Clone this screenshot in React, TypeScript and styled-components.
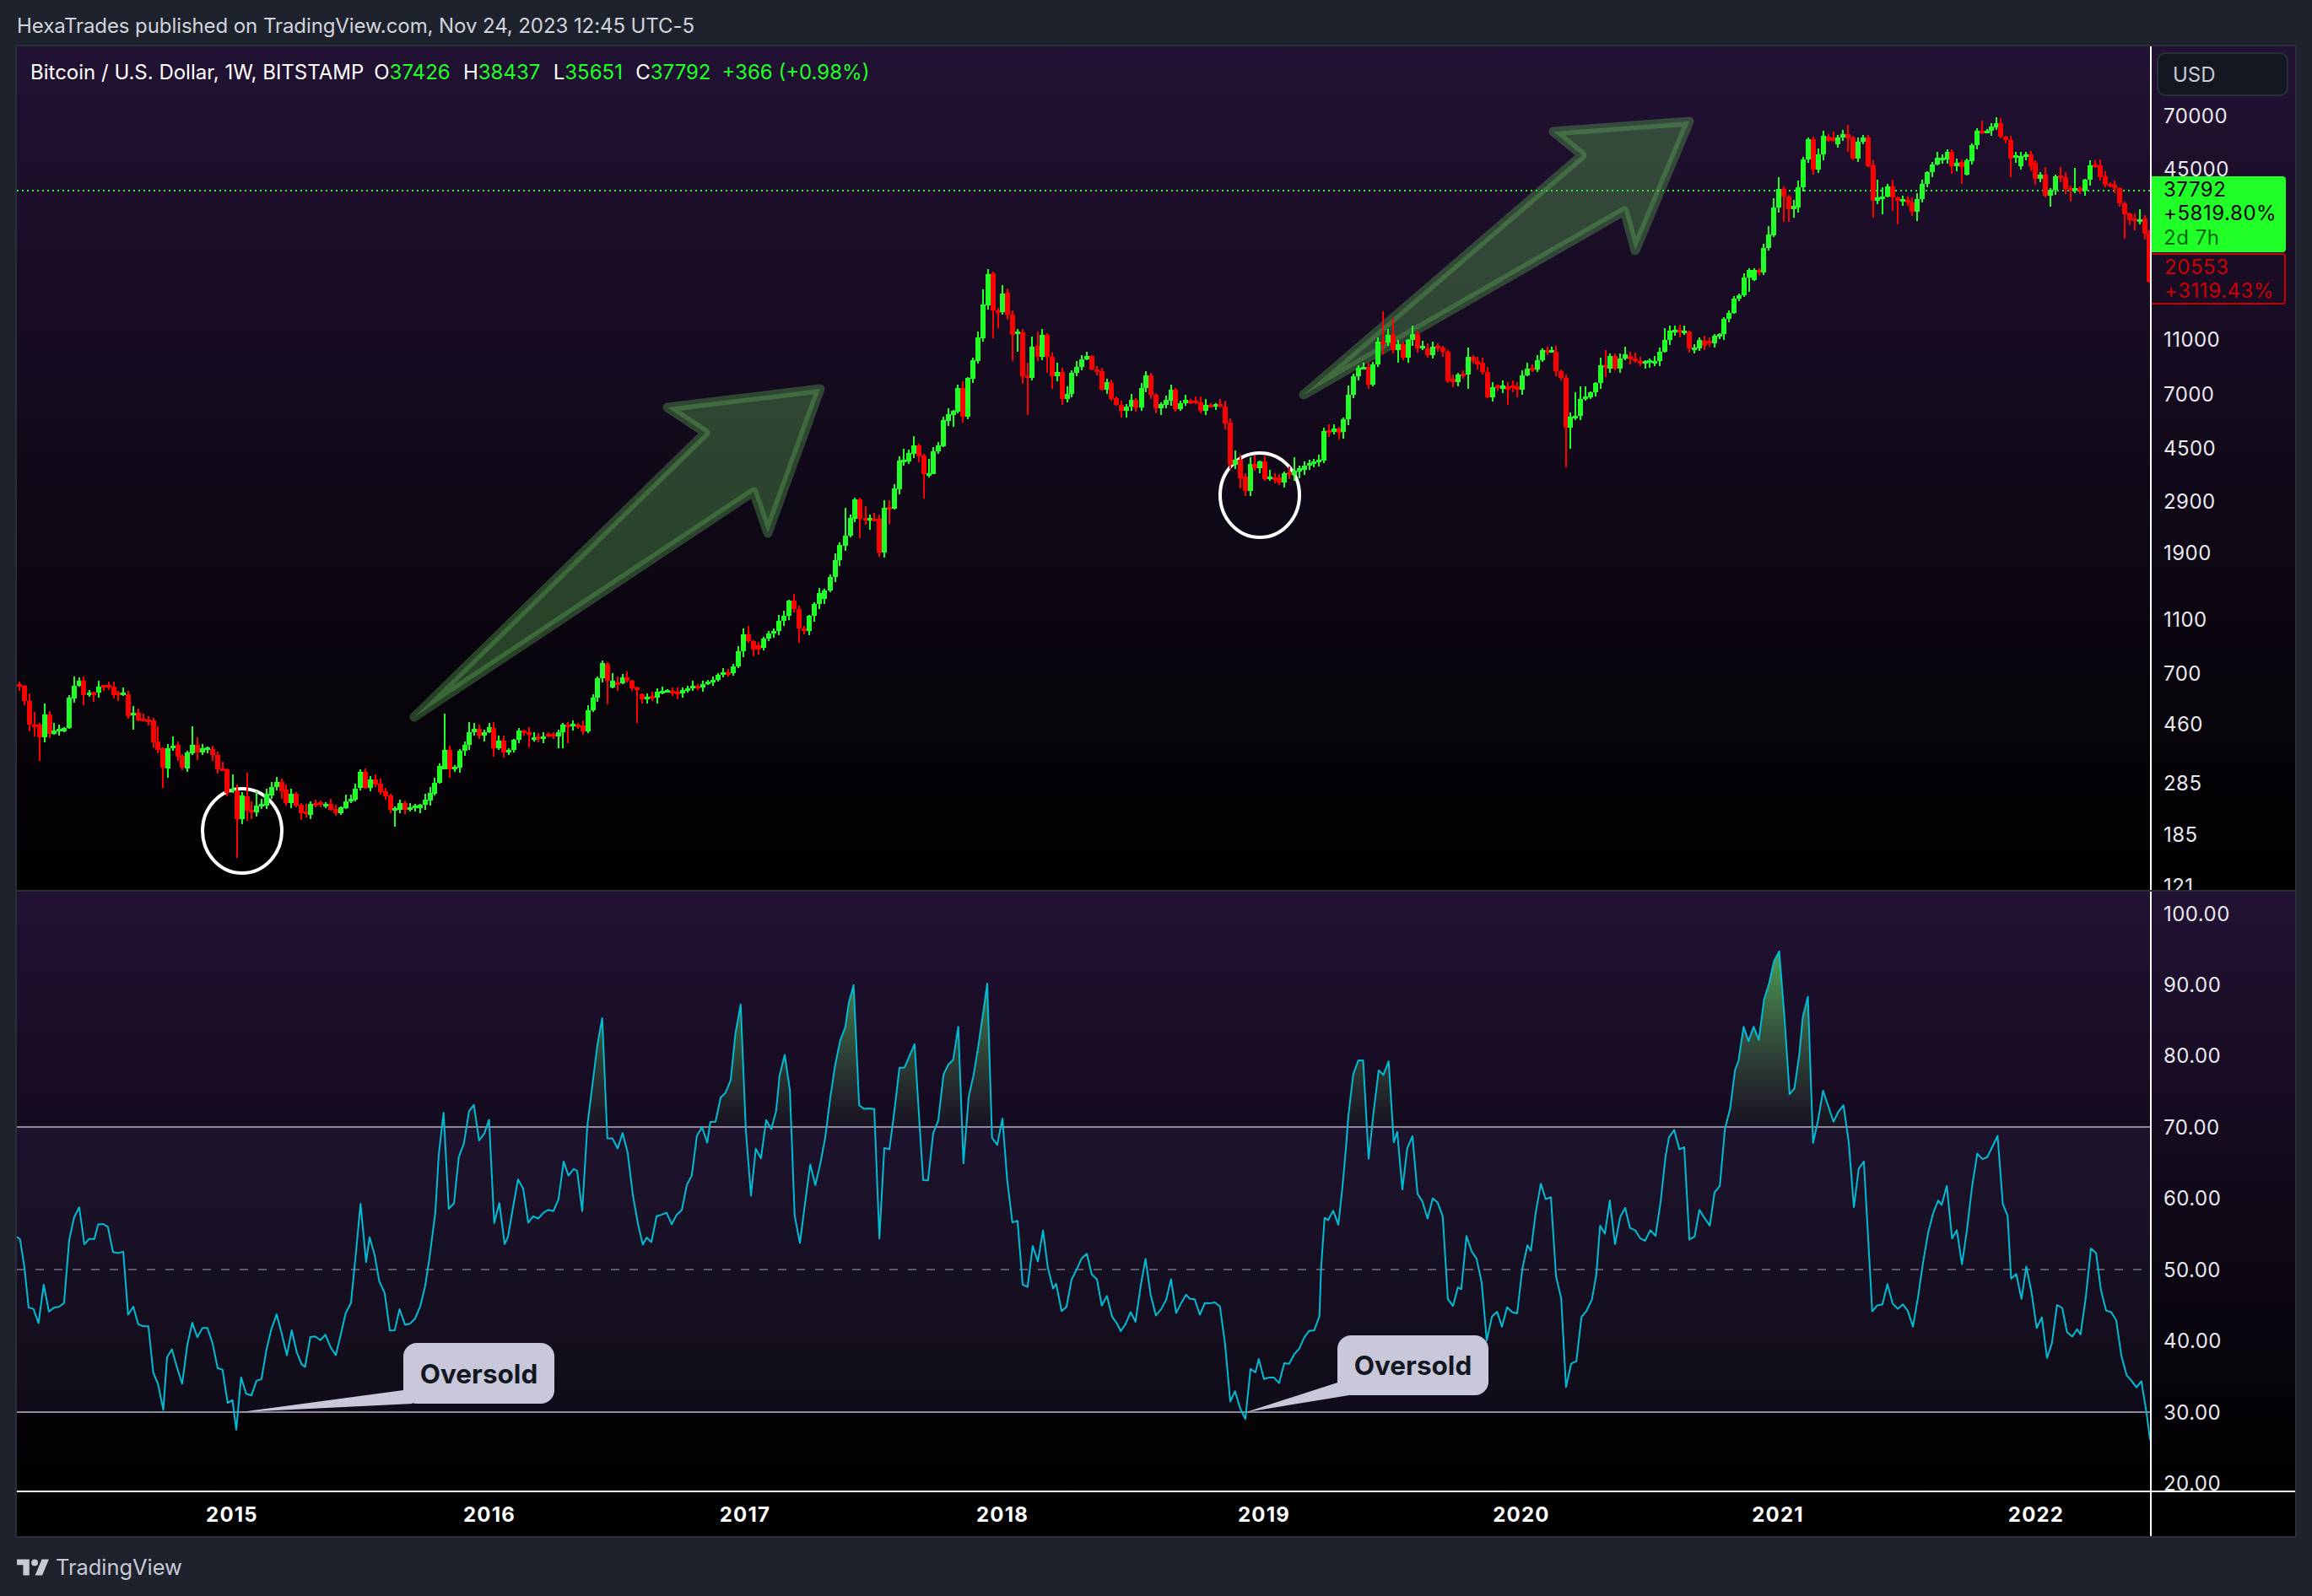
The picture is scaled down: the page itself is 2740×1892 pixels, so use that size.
import React from "react";
import styled, { createGlobalStyle } from "styled-components";

const GREEN = "#20ff28";
const RED = "#ff0000";

const Global = createGlobalStyle`
  html, body { margin: 0; padding: 0; background: #1e222d; }
  body { font-family: Inter, "Liberation Sans", sans-serif; width: 2740px; height: 1892px; overflow: hidden; }
`;

const Page = styled.div`
  width: 2740px; height: 1892px; display: flex; flex-direction: column; background: #1e222d;
`;
const Header = styled.div`
  height: 53px; padding: 8px 0 0 20px; display: flex; align-items: center; box-sizing: border-box;
  color: #d1d4dc; font-size: 24px; letter-spacing: -0.08px; white-space: nowrap;
`;
const Frame = styled.div`
  margin-left: 18px; width: 2704px; height: 1770px; box-sizing: border-box; border: 2px solid #2a2e39;
  display: grid; grid-template-rows: 1000px 712px 2px 52px; background: #000;
`;
const PaneRow = styled.div<{ $divider?: boolean; $from: string }>`
  display: grid; grid-template-columns: 2528px 2px 170px; position: relative; overflow: hidden;
  background: linear-gradient(180deg, ${(p) => p.$from} 0%, #000 100%);
  ${(p) => (p.$divider ? "border-top: 2px solid #2a2e39;" : "")}
`;
const Plot = styled.div`
  position: relative; overflow: hidden;
  svg { display: block; }
`;
const AxisRule = styled.div`background: #fff;`;
const Axis = styled.div`position: relative; overflow: hidden;`;
const AxisLabel = styled.div`
  position: absolute; left: 14px; transform: translateY(-50%); color: #e8e8ee; font-size: 24px; line-height: 28px; letter-spacing: 0.45px; white-space: nowrap;
`;
const Rule = styled.div`background: #fff;`;
const TimeRow = styled.div`
  display: grid; grid-template-columns: 2528px 2px 170px; background: #000;
`;
const TimeScale = styled.div`position: relative;`;
const TimeLabel = styled.div`
  position: absolute; top: 13px; transform: translateX(-50%); color: #fff; font-weight: 700; font-size: 24px; line-height: 28px; letter-spacing: 1.2px;
`;
const Legend = styled.div`
  position: absolute; left: 16px; top: 16px; display: flex; gap: 12px; color: #fff; font-size: 24px; line-height: 30px; white-space: nowrap;
`;
const LegendPair = styled.span`
  b { font-weight: 400; color: ${GREEN}; }
`;
const LegendChange = styled.span`color: ${GREEN}; margin-left: -2.3px;`;
const LegendValues = styled.span`display: flex; gap: 15.3px; margin-left: 0;`;
const UnitBox = styled.div`
  position: absolute; left: 6px; top: 7px; width: 156px; height: 52px; box-sizing: border-box; border: 2px solid #2a2e39; border-radius: 10px; background: #131722;
  color: #c8cad6; font-size: 24px; display: flex; align-items: center; padding-left: 17px;
`;
const PriceTag = styled.div<{ $outline?: boolean }>`
  position: absolute; left: -2px; width: 161px; box-sizing: border-box; padding-left: 16px; font-size: 24px; line-height: 28.4px; letter-spacing: 0.55px; border-radius: 0 4px 4px 0;
  ${(p) =>
    p.$outline
      ? `top: 245px; height: 61px; border: 2px solid #cc0000; color: #cc0000; padding-left: 15px; padding-top: 1px;`
      : `top: 154px; height: 90px; background: ${GREEN}; color: #000; padding-top: 2px;`}
`;
const Countdown = styled.div`color: #0b6b12;`;
const Bubble = styled.div<{ $x: number; $y: number; $w: number; $h: number }>`
  position: absolute; left: ${(p) => p.$x}px; top: ${(p) => p.$y}px; width: ${(p) => p.$w}px; height: ${(p) => p.$h}px;
  background: #c8c8da; border-radius: 16px; color: #131722; font-weight: 700; font-size: 31.5px;
  display: flex; align-items: center; justify-content: center;
`;
const Footer = styled.div`
  flex: 1; display: flex; align-items: center; gap: 8px; padding: 0 0 0 20px; color: #c8cad6; font-size: 25.4px;
`;

// ---------- candle data (reading of the chart: x, open, close, high, low) ----------
type Section = { x0: number; sx: number; y0: number; sy: number; rows: string };
const sections: Section[] = [
  { x0: 0, sx: 1.96, y0: 780, sy: 3, rows: `
45,93,99,85,117 57,99,152,,167 69,152,238,126,260 80,236,240,192,280 92,238,282,,365 103,282,201,162, 115,201,270,190, 126,270,258,232,275 138,258,252,237,275 149,262,250,245,262
161,250,140,132,252 172,143,99,67,160 184,99,81,70, 195,81,132,,167 207,132,122,115,138 218,122,124,120,155 229,124,101,82, 241,97,100,95,115 252,97,100 264,102,131 275,122,126,118,155 287,132,124
298,130,207,,215 310,205,195,172,255 321,195,222,180,225 333,216,222 345,218,222,208,240 356,222,300,,320 367,297,327,243,340 378,322,390,,460 390,393,322,305,425 402,322,311,280,330 413,308,350,,365 424,347,390,,398
436,392,336 447,338,309,243,345 459,309,337,282,362 470,336,322,305,345 482,322,318 494,323,346 505,346,396,,412 517,392,396,370, 528,396,480,,490 540,470,464,415,480 551,470,572,,712 563,572,489,,590
574,492,542,408,578 585,539,541,510,573 596,549,525,473,563 608,522,520,500,537 619,525,484 631,488,459 642,459,441,423, 654,441,473,430,502 665,468,516,,525 676,516,483 688,483,525,,530 699,522,552,,575 711,546,552,520,
722,557,519 734,515,518,505,533 745,513,517,507,530 757,527,518 768,518,539 780,537,552 791,552,531 803,533,511,487, 815,511,500 826,503,465 837,462,405,396, 849,405,462 860,462,431 872,431,449 884,447,477 895,475,491
907,489,540,,552 918,536,535,,600 930,540,516 941,516,540,507, 953,533,530,,548 965,533,526,520,548 976,533,522 988,522,503 999,506,481,460, 1010,483,443,425, 1022,443,385,375, 1033,395,327,198,395 1045,327,396,313,428
1056,396,387,,405 1068,390,331 1079,331,310,297, 1090,310,264,228, 1102,264,252,232, 1113,252,276,238,288 1125,276,264 1136,264,246,232, 1147,248,320,,350 1159,320,295,275, 1170,295,337 1182,335,326 1193,326,291
1205,291,258,250, 1217,258,268 1228,265,270,,316 1240,292,282 1251,280,283 1263,288,278 1274,270,272 1286,270,272 1297,278,265,,320 1307,265,237,,320 1319,237,245,228,303 1330,237,235,,258 1343,238,245,232, 1354,239,260
1366,260,186,168, 1377,186,142,130, 1388,142,72,65, 1400,72,18,10, 1411,20,82,,167 1423,105,81,55, 1435,87,89,67,117 1446,89,69 1457,68,82 1469,82,107 1480,105,108,,230 1492,130,147 1503,147,138 1515,135,141
1527,142,120 1538,118,116,102, 1550,117,115 1562,117,122` },
  { x0: 0, sx: 1, y0: 0, sy: 1, rows: `
803,820,822 809,822,818 815,818,816 821,816,813 827,813,815 833,815,811 839,811,808 845,808,806 851,806,800 857,800,797 863,797,799 869,798,790 875,790,772,766, 881,772,752,745, 887,752,760,742, 893,760,770,,778 899,765,770
905,768,757 911,757,751 917,751,748 923,748,736 929,736,730 935,730,712 941,712,722,704, 947,722,745,,762 953,745,748 959,748,730 965,730,716 971,716,703 977,710,700` },
  { x0: 800, sx: 1.96, y0: 300, sy: 3, rows: `
361,1200,1153 373,1153,1093,1068, 383,1093,1038,1030, 395,1040,1005,905, 407,1005,943,930, 418,945,876,870, 430,876,945,870,1015 442,943,945,900, 452,948,943,930,985 463,945,948,925, 474,945,1065,,1080 486,1065,906,878,
497,903,908,880,965 509,908,838,822, 521,840,738,723, 532,738,735,697, 543,740,711 554,713,685,652, 566,685,722,678,745 578,720,785,,873 589,785,782,733,800 600,785,705 611,705,685 623,687,594,583, 635,597,573
646,575,562,,618 657,565,480,468, 669,480,582,455,603 680,582,443,440, 692,447,380 703,385,300,280, 715,303,183,130, 727,185,75,57, 738,72,205,,303 750,203,208,,268 761,210,143,115, 772,140,218 784,218,290,,383
795,285,280,270,352 807,282,437,,465 819,435,443,390,575 830,443,333,297, 842,330,370,280, 853,370,292 864,292,370,285,425 876,370,437,355,483 888,437,423,390, 899,423,518,,540 911,518,502,473,530 922,502,425
933,425,405 945,405,378 957,378,367,350, 968,367,413 980,413,420,,435 991,420,485 1003,487,460 1014,462,518 1025,515,540 1037,540,560,,585 1048,560,547,,585 1060,547,522 1071,522,548,515,563 1083,548,480,463,
1094,480,435,420, 1106,435,503 1117,503,552,,570 1129,552,537,,578 1140,540,522 1152,525,485 1163,485,556,480, 1175,556,535 1186,535,522 1198,525,528 1210,525,529 1221,530,560 1233,560,540,520, 1244,540,542 1256,540,537
1267,537,540 1278,545,605,,628 1290,603,752 1301,752,735,703, 1313,735,800,,838 1325,795,845 1336,845,750,725, 1347,750,765,720, 1358,765,742,737, 1370,742,803 1382,800,795,770,810 1393,797,800,783, 1404,798,815,,825
1415,815,783,778, 1426,781,785 1438,788,775,725, 1450,778,765 1462,770,755 1473,757,747 1484,747,740 1496,745,735,,760 1507,737,633,622, 1519,630,635,610,655 1530,637,623 1542,625,640 1553,637,592 1565,592,505,470,` },
  { x0: 1400, sx: 1.363, y0: 100, sy: 3, rows: `
278,1105,1037 286,1037,1008 294,1010,1005 303,1005,1068 310,1068,997 318,997,915,900, 326,915,918,808,960 334,918,890,870, 342,890,945,832, 350,945,925,,990 358,925,972 366,972,910 374,910,888,858, 382,888,938 390,938,930
398,938,962 406,962,932 414,930,933 423,937,950 431,950,1055 439,1048,1058 447,1058,1033 455,1030,1035 463,1033,970,937,1085 471,970,985 479,985,995 487,990,1022 495,1022,1113 503,1113,1078,1060,1130 511,1072,1080
519,1082,1072 527,1075,1085,1058,1138 535,1072,1077 543,1075,1085,,1112 551,1085,1035 559,1035,1010,990, 567,1008,1015 575,1015,980 583,980,945,940, 591,945,948,932, 599,950,945 605,950,1020 613,1020,1045
621,1045,1222,,1360 629,1222,1183,,1298 637,1182,1180,1095, 645,1180,1118,1075, 653,1118,1110,1075, 661,1112,1095 669,1095,1063,1060, 677,1063,1000,972, 685,1000,1005,945,1040 693,1010,965 701,965,1010 709,1010,975
717,975,960,932, 725,965,978,950, 733,975,985 741,985,993 749,993,985 757,990,980 765,988,985 773,985,950 781,950,908,868, 789,908,875 797,880,872 805,872,880,855, 813,885,876 821,880,940 829,940,935,,955 837,938,910 845,912,930,,945
853,912,918 861,922,893 869,893,888 877,888,835 885,835,813,803, 893,813,763 901,763,750,745, 909,750,687,672, 917,687,660,655,740 925,695,660,655, 933,660,662 941,670,583,568, 949,583,535,503, 957,537,437,405,
965,437,372,330, 973,372,400,,490 981,400,445,,490 989,445,432,,475 997,437,366,342, 1005,366,268,258, 1013,268,195,190,, 1021,195,303,,320 1029,303,250 1037,250,183,165, 1045,185,200 1053,190,200 1061,213,188 1069,190,177
1077,178,193,145,240 1085,190,265 1093,265,203 1101,203,190,180, 1109,190,290 1117,288,415,,472 1125,415,402,340,428 1133,402,398,365,460 1141,398,363 1149,363,402,338,450 1157,402,415,,497 1165,415,407 1173,410,420
1181,420,452 1189,452,407,,485 1197,407,355 1205,355,313 1213,313,285 1221,285,262 1229,265,260,250, 1237,268,240,232, 1245,240,292,232,320 1253,292,280 1261,275,293,,355 1269,320,270 1277,272,217 1285,217,165,155,
1293,165,170,130, 1301,168,165 1309,165,150 1317,152,138,118, 1324,138,187 1332,187,198 1340,198,263,,330 1348,258,253,240, 1356,290,255 1364,255,250,240, 1372,250,290 1380,278,335 1388,335,322,,348 1396,320,395,295,
1404,395,375,,435 1412,375,327 1420,325,332,295, 1428,330,372 1436,370,378,,417 1444,378,370,297, 1452,370,378 1460,378,340 1468,340,287 1476,285,290,270, 1484,287,330 1492,328,358 1500,355,360 1508,358,370
1516,370,423 1524,423,462,,548 1532,460,483 1540,477,485,,520 1548,485,480,445, 1556,478,530 1564,530,640` },
  { x0: 2440, sx: 3, y0: 0, sy: 3, rows: `320,940,1003` },
];

type Candle = { x: number; o: number; c: number; h: number; l: number };
const candles: Candle[] = (() => {
  const out: Candle[] = [];
  let seed = 17;
  const rnd = () => ((seed = (seed * 16807) % 2147483647) / 2147483647);
  sections.forEach((s) => {
    s.rows.trim().split(/\s+/).forEach((tok) => {
      const [px, o, c, h, l] = tok.split(",").map((v) => (v === "" ? NaN : Number(v)));
      const Y = (v: number) => s.y0 + v / s.sy;
      const oy = Y(o), cy = Y(c);
      const top = Math.min(oy, cy), bot = Math.max(oy, cy);
      const ht = h === undefined || isNaN(h) ? top - 1 - rnd() * 6 : Y(h);
      const lw = l === undefined || isNaN(l) ? bot + 1 + rnd() * 6 : Y(l);
      out.push({ x: Math.round(s.x0 + px / s.sx), o: oy, c: cy, h: ht, l: lw });
    });
  });
  return out;
})();

// ---------- RSI line, per crop: px,py ----------
const rsiCrops: { x0: number; sx: number; min: number; pts: string }[] = [
  { x0: 20, sx: 2.45, min: 0, pts: `0,905 9,912 22,1000 34,1124 48,1128 63,1172 78,1053 93,1136 108,1124 122,1122 137,1110 152,915 166,845 181,813 196,928 210,911 225,912 236,866 250,865 264,874 279,952 294,955 309,951 323,1146 338,1121 352,1175 367,1182 382,1182 396,1325 410,1361 425,1441 436,1278 450,1253 465,1310 480,1360 495,1240 509,1171 524,1216 539,1187 553,1187 568,1233 583,1312 597,1316 612,1419 626,1411 637,1502 651,1340 666,1391 681,1396 696,1350 710,1346 725,1253 739,1191 754,1145 769,1205 784,1272 798,1194 813,1263 827,1300 837,1308 852,1215 866,1213 881,1225 896,1208 911,1247 926,1271 941,1205 955,1140 970,1111 985,950 998,802 1014,983 1024,906 1039,962 1052,1042 1068,1079 1083,1195 1097,1194 1111,1129 1127,1177 1141,1174 1156,1159 1171,1120 1185,1060 1198,970 1215,830 1225,650 1239,520 1254,818 1269,801 1283,658 1298,615 1313,515 1327,496 1342,606 1357,585 1371,542 1386,862 1401,800 1416,927 1426,905 1441,810 1455,727 1470,755 1485,861 1499,841 1514,848 1529,830 1543,821 1558,825 1568,800` },
  { x0: 650, sx: 2.45, min: 29, pts: `29,790 44,672 58,715 73,695 83,700 98,825 113,560 127,440 142,310 156,227 171,600 186,600 201,631 215,583 230,645 245,775 260,865 274,929 285,907 299,921 314,841 329,836 343,830 358,866 372,837 387,822 402,743 416,715 431,592 446,565 461,613 470,549 485,548 500,473 514,459 529,420 543,275 558,185 573,575 588,777 602,632 617,662 632,543 647,571 661,515 671,405 686,341 701,450 715,840 730,924 745,800 760,681 775,745 790,675 803,600 818,475 832,375 847,297 862,255 872,180 886,125 902,497 916,508 931,507 946,509 961,910 975,630 990,633 1005,510 1019,381 1034,380 1048,345 1063,308 1078,565 1088,729 1102,730 1117,585 1132,544 1147,402 1161,371 1175,357 1190,254 1205,677 1220,472 1235,400 1250,300 1265,190 1274,120 1288,598 1303,620 1318,538 1332,730 1347,860 1362,855 1377,1053 1391,1060 1406,933 1421,981 1436,885 1450,1000 1465,1065 1474,1050 1490,1135 1504,1122 1519,1037 1534,1005 1548,972 1563,957` },
  { x0: 1280, sx: 2.45, min: 30, pts: `34,1021 49,1036 63,1118 78,1088 93,1152 107,1173 118,1197 132,1175 147,1138 161,1168 176,1058 190,973 205,1085 220,1148 235,1130 250,1100 264,1036 279,1141 294,1109 308,1084 318,1096 333,1098 348,1146 362,1110 377,1111 391,1108 406,1120 421,1235 436,1415 450,1383 465,1437 480,1469 495,1314 509,1325 519,1283 534,1345 548,1341 563,1341 578,1358 593,1296 607,1298 622,1268 636,1252 651,1217 665,1196 680,1194 695,1150 700,1000 710,846 720,853 735,824 750,867 762,750 772,630 779,530 793,402 808,358 822,358 838,663 852,520 867,389 881,403 896,361 911,612 921,580 936,758 950,630 965,593 980,772 994,795 1009,848 1024,785 1038,798 1053,841 1068,1098 1083,1119 1097,1061 1107,1067 1122,902 1137,950 1151,972 1166,1045 1181,1226 1196,1152 1211,1137 1225,1183 1240,1123 1255,1138 1269,1142 1284,1005 1299,931 1309,948 1323,830 1338,740 1352,788 1367,782 1382,1027 1397,1095 1411,1370 1426,1298 1441,1290 1456,1153 1470,1135 1486,1100 1499,1023 1510,870 1524,895 1538,792 1553,927` },
  { x0: 1910, sx: 2.442, min: 10, pts: `10,927 25,843 39,815 53,877 68,884 83,910 97,917 112,884 127,902 142,795 156,655 166,597 181,574 196,634 210,627 225,913 240,904 254,821 269,847 284,870 298,767 313,747 328,570 343,507 357,388 367,360 382,254 396,299 411,254 426,295 441,170 456,118 470,50 485,20 500,225 515,463 529,445 543,340 553,225 568,161 583,614 597,545 612,452 642,548 656,518 671,497 686,610 701,813 715,694 730,671 745,960 754,1136 769,1117 784,1114 798,1051 813,1111 828,1128 843,1114 857,1134 872,1183 887,1090 901,985 916,892 931,830 945,792 955,806 970,747 985,910 999,884 1014,990 1028,885 1043,750 1058,647 1073,664 1087,658 1102,625 1117,592 1132,803 1146,840 1156,1034 1171,1020 1186,1097 1200,997 1215,1075 1230,1187 1245,1154 1260,1280 1274,1235 1289,1116 1304,1125 1318,1200 1333,1214 1347,1191 1357,1207 1372,1095 1387,941 1402,955 1416,1070 1431,1133 1446,1138 1460,1163 1475,1272 1490,1333 1504,1350 1519,1371 1533,1352 1548,1450 1558,1532 1563,1528` },
];
const rsiPoints: [number, number][] = rsiCrops.flatMap((c) =>
  c.pts.trim().split(/\s+/).map((t) => {
    const [px, py] = t.split(",").map(Number);
    return [+(c.x0 + px / c.sx).toFixed(1), +(1120 + py / 2.6133).toFixed(1)] as [number, number];
  })
);
const rsiLine = rsiPoints.map((p) => p.join(",")).join(" ");
const LINE70 = 1336;
const LINE30 = 1674;
const rsiArea = `${rsiPoints[0][0]},${LINE70} ${rsiLine} ${rsiPoints[rsiPoints.length - 1][0]},${LINE70}`;

const priceLabels: [string, number][] = [
  ["70000", 138], ["45000", 201], ["11000", 403], ["7000", 468], ["4500", 532], ["2900", 595], ["1900", 656],
  ["1100", 735], ["700", 799], ["460", 859], ["285", 929], ["185", 990], ["121", 1051],
];
const rsiLabels: [string, number][] = [
  ["100.00", 1084], ["90.00", 1168], ["80.00", 1252], ["70.00", 1337], ["60.00", 1421], ["50.00", 1506],
  ["40.00", 1590], ["30.00", 1675], ["20.00", 1759],
];
const years: [string, number][] = [
  ["2015", 275], ["2016", 580], ["2017", 883], ["2018", 1188], ["2019", 1498], ["2020", 1803], ["2021", 2107], ["2022", 2413],
];

const arrow1 = "491,850 836,513 791,483 972,461 910,632 893,583";
const arrow2 = "1545,468 1875,184 1841,156 2002,144 1938,297 1925,250";

const PriceChart = () => (
  <svg width={2528} height={1000} viewBox="20 55 2528 1000">
    <line x1={20} x2={2548} y1={226} y2={226} stroke={GREEN} strokeWidth={2} strokeDasharray="2 4" shapeRendering="crispEdges" />
    {[arrow1, arrow2].map((a) => (
      <polygon key={a} points={a} fill="rgba(95,175,85,0.36)" stroke="rgba(95,175,85,0.36)" strokeWidth={11} strokeLinejoin="round" />
    ))}
    <ellipse cx={287} cy={985} rx={47} ry={50} fill="none" stroke="#fff" strokeWidth={4} />
    <ellipse cx={1493} cy={587} rx={47} ry={50} fill="none" stroke="#fff" strokeWidth={4} />
    {candles.map((k, i) => {
      const up = k.c < k.o;
      const top = Math.round(Math.min(k.o, k.c));
      const bot = Math.round(Math.max(k.o, k.c));
      const color = up ? GREEN : RED;
      return (
        <g key={i} fill={color} shapeRendering="crispEdges">
          <rect x={k.x - 1} y={Math.round(k.h)} width={2} height={Math.max(1, Math.round(k.l - k.h))} />
          <rect x={k.x - 3} y={top} width={6} height={Math.max(3, bot - top)} />
        </g>
      );
    })}
  </svg>
);

const RsiChart = () => (
  <svg width={2528} height={710} viewBox="20 1057 2528 710">
    <defs>
      <linearGradient id="rsiGlow" gradientUnits="userSpaceOnUse" x1={0} x2={0} y1={1125} y2={LINE70}>
        <stop offset="0" stopColor="rgb(80,170,85)" stopOpacity={0.95} />
        <stop offset="1" stopColor="rgb(70,110,70)" stopOpacity={0.08} />
      </linearGradient>
      <clipPath id="above70">
        <rect x={20} y={1057} width={2528} height={LINE70 - 1057} />
      </clipPath>
    </defs>
    <rect x={20} y={LINE70} width={2528} height={LINE30 - LINE70} fill="rgba(120,100,180,0.1)" />
    <polygon points={rsiArea} fill="url(#rsiGlow)" clipPath="url(#above70)" />
    <line x1={20} x2={2548} y1={LINE70} y2={LINE70} stroke="#8b8a96" strokeWidth={2} />
    <line x1={20} x2={2548} y1={LINE30} y2={LINE30} stroke="#8b8a96" strokeWidth={2} />
    <line x1={20} x2={2548} y1={1505} y2={1505} stroke="#5e5b69" strokeWidth={2} strokeDasharray="10 12" />
    <polyline points={rsiLine} fill="none" stroke="#00bcd4" strokeWidth={2} strokeLinejoin="round" />
    <polygon points="478,1648 285,1674 489,1664" fill="#c8c8da" />
    <polygon points="1585,1639 1477,1674 1599,1654" fill="#c8c8da" />
  </svg>
);

const TvLogo = () => (
  <svg width={38} height={20} viewBox="0 0 36 19">
    <path fill="#c8cad6" d="M14 18.5H7V7H0V.5h14v18zM28.5 18.5h-8L28 .5h8l-7.5 18z" />
    <circle cx="20" cy="4.2" r="3.7" fill="#c8cad6" />
  </svg>
);

export default function App() {
  return (
    <Page>
      <Global />
      <Header>HexaTrades published on TradingView.com, Nov 24, 2023 12:45 UTC-5</Header>
      <Frame>
        <PaneRow $from="#221233">
          <Plot>
            <PriceChart />
            <Legend>
              <span>Bitcoin / U.S. Dollar, 1W, BITSTAMP</span>
              <LegendValues>
                <LegendPair>O<b>37426</b></LegendPair>
                <LegendPair>H<b>38437</b></LegendPair>
                <LegendPair>L<b>35651</b></LegendPair>
                <LegendPair>C<b>37792</b></LegendPair>
                <LegendChange>+366 (+0.98%)</LegendChange>
              </LegendValues>
            </Legend>
          </Plot>
          <AxisRule />
          <Axis>
            <UnitBox>USD</UnitBox>
            {priceLabels.map(([t, y]) => (
              <AxisLabel key={t} style={{ top: y - 55 }}>{t}</AxisLabel>
            ))}
            <PriceTag>
              37792
              <br />
              +5819.80%
              <Countdown>2d 7h</Countdown>
            </PriceTag>
            <PriceTag $outline>
              20553
              <br />
              +3119.43%
            </PriceTag>
          </Axis>
        </PaneRow>
        <PaneRow $from="#221233" $divider>
          <Plot>
            <RsiChart />
            <Bubble $x={458} $y={535} $w={179} $h={72}>Oversold</Bubble>
            <Bubble $x={1565} $y={526} $w={179} $h={71}>Oversold</Bubble>
          </Plot>
          <AxisRule />
          <Axis>
            {rsiLabels.map(([t, y]) => (
              <AxisLabel key={t} style={{ top: y - 1057 }}>{t}</AxisLabel>
            ))}
          </Axis>
        </PaneRow>
        <Rule />
        <TimeRow>
          <TimeScale>
            {years.map(([t, x]) => (
              <TimeLabel key={t} style={{ left: x - 20 }}>{t}</TimeLabel>
            ))}
          </TimeScale>
          <AxisRule />
          <div />
        </TimeRow>
      </Frame>
      <Footer>
        <TvLogo />
        <span>TradingView</span>
      </Footer>
    </Page>
  );
}
